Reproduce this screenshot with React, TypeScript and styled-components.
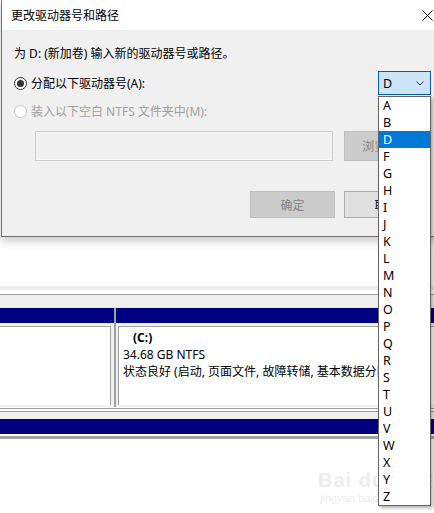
import styled, { createGlobalStyle } from 'styled-components';

const GlobalStyle = createGlobalStyle`
  html, body {
    margin: 0;
    padding: 0;
    background: #ffffff;
  }
  body {
    font-family: "Noto Sans", "Noto Sans CJK SC", sans-serif;
    font-size: 12px;
    color: #000;
  }
`

const letters = ['A', 'B', 'D', 'F', 'G', 'H', 'I', 'J', 'K', 'L', 'M', 'N', 'O', 'P', 'Q', 'R', 'S', 'T', 'U', 'V', 'W', 'X', 'Y', 'Z'];

// 背景：ディスクの管理
/*----------------------------------- */
const Screen = styled.div`
  position: relative;
  width: 434px;
  height: 513px;
  overflow: hidden;
  background: #ffffff;
`
const BlankArea = styled.div`
  height: 286px;
`
const LightBand = styled.div`
  height: 4px;
  background: #ececec;
  margin-bottom: 4px;
`
const HeaderStrip = styled.div`
  height: 12px;
  border-top: 1px solid #9d9d9d;
  border-bottom: 1px solid #e8e8e8;
  background: #f0f0f0;
`
const Volumes = styled.div`
  display: flex;
  height: 99px;
  background: #f0f0f0;
`
const VolumeCol = styled.div<{ $width?: number }>`
  display: flex;
  flex-direction: column;
  ${({ $width }) => ($width ? `width: ${$width}px;` : 'flex: 1;')}
`
const NavyBar = styled.div`
  height: 15px;
  background: #000080;
  flex-shrink: 0;
`
const Splitter = styled.div`
  width: 2px;
  background: #a0a0a0;
`
const VolumePane = styled.div<{ $left?: boolean }>`
  flex: 1;
  margin: 3px ${({ $left }) => ($left ? '3px' : '0')} 2px ${({ $left }) => ($left ? '0' : '2px')};
  background: #ffffff;
  border-top: 1px solid #a0a0a0;
  ${({ $left }) => ($left ? 'border-right: 1px solid #a0a0a0;' : 'border-left: 1px solid #a0a0a0;')}
  padding: 2px 0 0 4px;
  white-space: nowrap;
  overflow: hidden;
`
const PaneLine = styled.div<{ $bold?: boolean }>`
  height: 17px;
  line-height: 17px;
  font-weight: ${({ $bold }) => ($bold ? 700 : 400)};
  padding-left: ${({ $bold }) => ($bold ? '10px' : '0')};
`
const BottomLines = styled.div`
  height: 10px;
  border-top: 1px solid #a0a0a0;
  margin-top: 1px;
  background: #f0f0f0;
  box-shadow: inset 0 2px 0 #ffffff, inset 0 3px 0 #a0a0a0;
`
const BottomBar = styled.div`
  height: 15px;
  background: #000080;
  border-bottom: 2px solid #ffffff;
  box-shadow: 0 3px 0 #a0a0a0;
`
// 透かし（画像に重なるロゴ）
const Watermark = styled.div`
  position: absolute;
  left: 318px;
  top: 470px;
  color: #ededed;
  font-family: "Liberation Sans", "Noto Sans CJK SC", sans-serif;
  line-height: 1;
`
const WmBig = styled.div`
  font-size: 20px;
  font-weight: 700;
  letter-spacing: 1px;
`
const WmSmall = styled.div`
  font-size: 11px;
  margin-top: 3px;
  padding-left: 2px;
`

// ダイアログ
/*----------------------------------- */
const Dialog = styled.div`
  position: absolute;
  left: 1px;
  top: 0;
  width: 440px;
  height: 237px;
  background: #f0f0f0;
  border-left: 1px solid #707070;
  border-bottom: 1px solid #707070;
  box-shadow: 0 4px 9px rgba(0, 0, 0, 0.22);
  display: flex;
  flex-direction: column;
  box-sizing: border-box;
`
const TitleBar = styled.div`
  height: 30px;
  background: #ffffff;
  display: flex;
  align-items: center;
  padding: 0 8px 0 9px;
  flex-shrink: 0;
`
const Title = styled.span`
  font-size: 12px;
  flex: 1;
`
const DialogBody = styled.div`
  padding: 16px 0 0 12px;
  display: flex;
  flex-direction: column;
  width: 417px;
`
const Prompt = styled.div`
  height: 16px;
  line-height: 16px;
`
const OptionRow = styled.div<{ $height: number; $top: number }>`
  display: flex;
  align-items: center;
  justify-content: space-between;
  height: ${({ $height }) => $height}px;
  margin-top: ${({ $top }) => $top}px;
`
const RadioLabel = styled.label<{ $disabled?: boolean }>`
  display: flex;
  align-items: center;
  gap: 4px;
  color: ${({ $disabled }) => ($disabled ? '#a0a0a0' : '#000')};
`
const RadioCircle = styled.span<{ $checked?: boolean; $disabled?: boolean }>`
  width: 11px;
  height: 11px;
  border-radius: 50%;
  border: 1px solid ${({ $disabled }) => ($disabled ? '#c8c8c8' : '#333')};
  background: #ffffff;
  display: flex;
  align-items: center;
  justify-content: center;
  &::after {
    content: '';
    display: ${({ $checked }) => ($checked ? 'block' : 'none')};
    width: 7px;
    height: 7px;
    border-radius: 50%;
    background: #333;
  }
`
const ComboWrap = styled.div`
  position: relative;
  width: 53px;
  height: 24px;
`
const Combo = styled.div`
  box-sizing: border-box;
  height: 24px;
  border: 1px solid #0060b0;
  background: #cce4f7;
  display: flex;
  align-items: center;
  justify-content: space-between;
  padding: 0 6px 0 4px;
  font-size: 12.5px;
`
const DropList = styled.ul`
  position: absolute;
  top: 25px;
  left: 0;
  width: 53px;
  margin: 0;
  padding: 0;
  list-style: none;
  box-sizing: border-box;
  border: 1px solid #646464;
  background: #ffffff;
  box-shadow: 2px 2px 3px rgba(0, 0, 0, 0.3);
  z-index: 10;
`
const DropItem = styled.li<{ $selected?: boolean }>`
  height: 17px;
  line-height: 17px;
  padding-left: 4px;
  font-size: 12.5px;
  background: ${({ $selected }) => ($selected ? '#0078d7' : 'transparent')};
  color: ${({ $selected }) => ($selected ? '#ffffff' : '#000')};
`
const PathRow = styled.div`
  display: flex;
  gap: 11px;
  margin: 9px 0 0 21px;
  height: 30px;
`
const PathBox = styled.div`
  width: 298px;
  box-sizing: border-box;
  border: 1px solid #cccccc;
  box-shadow: inset 0 0 0 1px #f7f7f7;
  background: #f0f0f0;
`
const Button = styled.div<{ $disabled?: boolean }>`
  width: 85px;
  box-sizing: border-box;
  display: flex;
  align-items: center;
  justify-content: center;
  white-space: nowrap;
  background: ${({ $disabled }) => ($disabled ? '#cccccc' : '#e1e1e1')};
  border: 1px solid ${({ $disabled }) => ($disabled ? '#bfbfbf' : '#adadad')};
  color: ${({ $disabled }) => ($disabled ? '#838383' : '#000')};
`
const ButtonRow = styled.div`
  display: flex;
  gap: 9px;
  margin: 30px 0 0 236px;
  height: 27px;
`
/*----------------------------------- */

const App = () => {
  return (
    <Screen>
      <GlobalStyle />

      <BlankArea />
      <LightBand />
      <HeaderStrip />
      <Volumes>
        <VolumeCol $width={114}>
          <NavyBar />
          <VolumePane $left />
        </VolumeCol>
        <Splitter />
        <VolumeCol>
          <NavyBar />
          <VolumePane>
            <PaneLine $bold>(C:)</PaneLine>
            <PaneLine>34.68 GB NTFS</PaneLine>
            <PaneLine>状态良好 (启动, 页面文件, 故障转储, 基本数据分区)</PaneLine>
          </VolumePane>
        </VolumeCol>
      </Volumes>
      <BottomLines />
      <BottomBar />

      <Watermark>
        <WmBig>Bai du 经验</WmBig>
        <WmSmall>jingyan.baidu.com</WmSmall>
      </Watermark>

      <Dialog>
        <TitleBar>
          <Title>更改驱动器号和路径</Title>
          <svg width="11" height="11" viewBox="0 0 11 11">
            <path d="M0.5 0.5 L10.5 10.5 M10.5 0.5 L0.5 10.5" stroke="#000" strokeWidth="1" />
          </svg>
        </TitleBar>
        <DialogBody>
          <Prompt>为 D: (新加卷) 输入新的驱动器号或路径。</Prompt>
          <OptionRow $height={24} $top={9}>
            <RadioLabel>
              <RadioCircle $checked />
              分配以下驱动器号(A):
            </RadioLabel>
            <ComboWrap>
              <Combo>
                D
                <svg width="8" height="5" viewBox="0 0 8 5">
                  <path d="M0.5 0.5 L4 4 L7.5 0.5" fill="none" stroke="#333" strokeWidth="1" />
                </svg>
              </Combo>
              <DropList>
                {letters.map((l) => (
                  <DropItem key={l} $selected={l === 'D'}>{l}</DropItem>
                ))}
              </DropList>
            </ComboWrap>
          </OptionRow>
          <OptionRow $height={22} $top={5}>
            <RadioLabel $disabled>
              <RadioCircle $disabled />
              装入以下空白 NTFS 文件夹中(M):
            </RadioLabel>
          </OptionRow>
          <PathRow>
            <PathBox />
            <Button $disabled>浏览(B)...</Button>
          </PathRow>
          <ButtonRow>
            <Button $disabled>确定</Button>
            <Button>取消</Button>
          </ButtonRow>
        </DialogBody>
      </Dialog>
    </Screen>
  );
}
export default App;
